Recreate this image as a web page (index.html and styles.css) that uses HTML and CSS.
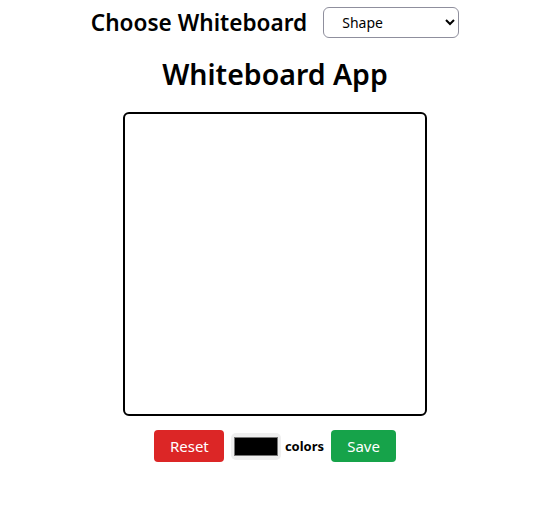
FILE: index.html
```html
<!DOCTYPE html>
<html lang="en">
<head>
    <meta charset="UTF-8">
    <meta name="viewport" content="width=device-width, initial-scale=1.0">
    <title>Whiteboard App</title>
    <link rel="stylesheet" href="styles.css">
</head>
<body>
    <div class="app">
        <div class="chooser">
            <h2>Choose Whiteboard</h2>
            <select class="mode-select">
                <option>Shape</option>
                <option>Freehand</option>
            </select>
        </div>

        <h1>Whiteboard App</h1>

        <canvas class="board" width="300" height="300"></canvas>

        <div class="toolbar">
            <button class="btn btn-reset">Reset</button>
            <input type="color" class="color-picker" value="#000000">
            <span class="color-label">colors</span>
            <button class="btn btn-save">Save</button>
        </div>
    </div>
</body>
</html>
```

FILE: styles.css
```css
body {
    margin: 0;
    font-family: 'Noto Sans', 'Open Sans', sans-serif;
    background: #ffffff;
    color: #000000;
}

.app {
    display: flex;
    flex-direction: column;
    align-items: center;
    padding-left: 12px;
}

.chooser {
    display: flex;
    align-items: center;
    gap: 16px;
    margin-top: 7px;
}

.chooser h2 {
    margin: 0;
    font-size: 22.6px;
    font-weight: 600;
    line-height: 31px;
}

.mode-select {
    width: 136px;
    height: 31px;
    padding: 0 8px 0 14px;
    border: 1px solid #8f8f9d;
    border-radius: 6px;
    background: #ffffff;
    font-family: 'Noto Sans', sans-serif;
    font-size: 14px;
    color: #000;
}

h1 {
    margin: 16px 0 0;
    font-size: 28.5px;
    font-weight: 600;
    line-height: 40px;
}

.board {
    margin-top: 18px;
    border: 2px solid #000000;
    border-radius: 6px;
    background: #ffffff;
    display: block;
}

.toolbar {
    display: flex;
    align-items: center;
    margin-top: 14px;
}

.btn {
    height: 32px;
    border: none;
    border-radius: 4px;
    color: #ffffff;
    font-family: 'Noto Sans', sans-serif;
    font-size: 15px;
    padding: 0 16px;
    cursor: pointer;
}

.btn-reset {
    width: 70px;
    background: #dc2626;
}

.btn-save {
    width: 65px;
    background: #16a34a;
}

.color-picker {
    width: 50px;
    height: 27px;
    margin: 0 0 0 7px;
    padding: 4px 3px;
    border: none;
    border-radius: 5px;
    background: #efefef;
}

.color-picker::-webkit-color-swatch-wrapper {
    padding: 0;
}

.color-picker::-webkit-color-swatch {
    border: 1px solid #767676;
    border-radius: 0;
}

.color-label {
    margin: 0 7px 0 4px;
    font-size: 13px;
    font-weight: 700;
}
```
